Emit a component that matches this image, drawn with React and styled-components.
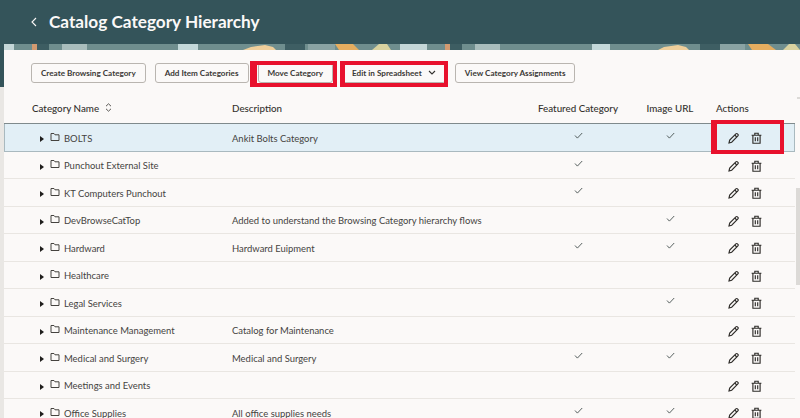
import React from "react";
import styled, { createGlobalStyle } from "styled-components";

const Global = createGlobalStyle`
  html, body { margin: 0; padding: 0; height: 100%; overflow: hidden; background: #e9e7e4; }
  body { font-family: Lato, "Noto Sans", sans-serif; color: #2e2c29; }
`;

const Shell = styled.div`
  position: relative;
  width: 800px;
  height: 418px;
  overflow: hidden;
  background: linear-gradient(#34545a 87px, #e9e7e4 87px);
`;

const Header = styled.header`
  height: 44px;
  display: flex;
  align-items: center;
  padding: 0 0 0 31px;
  gap: 12px;
`;

const Title = styled.h1`
  margin: 0;
  font-size: 17.2px;
  font-weight: 700;
  color: #fbf9f8;
  line-height: 1;
`;

const BannerArt = styled.svg`
  display: block;
  margin-left: 4px;
  width: 796px;
  height: 6px;
`;

const Panel = styled.main`
  margin-left: 4px;
  background: #fbf9f8;
  height: 368px;
  position: relative;
`;

const Toolbar = styled.div`
  display: flex;
  align-items: center;
  height: 44px;
  padding: 1px 0 0 27px;
  gap: 9px;
  box-sizing: border-box;
`;

const Button = styled.button`
  height: 20px;
  padding: 0 9px;
  display: inline-flex;
  align-items: center;
  gap: 6px;
  border: 1px solid #b9b5b0;
  border-radius: 3px;
  background: #fbf9f8;
  color: #3a3835;
  font: 700 8.15px Lato, "Noto Sans", sans-serif;
  white-space: nowrap;
`;

const Grid = styled.div`
  display: grid;
  grid-template-columns: 200px 300px 92px 92px 1fr;
  padding-left: 28px;
  margin-right: 5px;
  align-items: center;
  box-sizing: border-box;
`;

const HeadRow = styled(Grid)`
  height: 30px;
  padding-bottom: 2px;
  font-size: 9.8px;
  font-weight: 500;
  color: #33312e;
  border-bottom: 1px solid #7f8a8c;
`;

const HeadName = styled.div`
  display: flex;
  align-items: center;
  gap: 6px;
`;

const HeadCenter = styled.div`
  text-align: center;
`;

const Row = styled(Grid)`
  height: 27.5px;
  padding-top: 1.5px;
  font-size: 9.45px;
  color: #45433f;
  border-bottom: 1px solid ${(p) => (p.$active ? "#a9b9bf" : "#e9e6e2")};
  background: ${(p) => (p.$active ? "#e2eff6" : "transparent")};
  box-shadow: ${(p) => (p.$active ? "inset 1px 0 #a9b9bf, inset -1px 0 #a9b9bf" : "none")};
`;

const NameCell = styled.div`
  display: flex;
  align-items: center;
  padding-left: 8px;
`;

const Caret = styled.svg`
  width: 4px;
  height: 6px;
  margin-top: 2px;
  margin-right: 6px;
  fill: #1f1e1c;
`;

const FolderIcon = styled.svg`
  width: 10px;
  height: 10px;
  margin-top: -3px;
  margin-right: 4px;
  fill: none;
  stroke: #45433f;
  stroke-width: 1;
`;

const CheckCell = styled.div`
  display: flex;
  justify-content: center;
  margin-top: -5px;
`;

const CheckIcon = styled.svg`
  width: 9px;
  height: 7px;
  fill: none;
  stroke: #45504f;
  stroke-width: 0.9;
`;

const Actions = styled.div`
  display: flex;
  align-items: center;
  padding-left: 12px;
  gap: 12px;
`;

const ActionIcon = styled.svg`
  width: 11px;
  height: 12px;
  fill: none;
  stroke: #2e2c29;
  stroke-width: 1.15;
`;

const RedBox = styled.div`
  position: absolute;
  box-sizing: border-box;
  left: ${(p) => p.$x}px;
  top: ${(p) => p.$y}px;
  width: ${(p) => p.$w}px;
  height: ${(p) => p.$h}px;
  border: 4px solid #e8112d;
  border-left-width: ${(p) => p.$lw}px;
  pointer-events: none;
`;

const ScrollThumb = styled.div`
  position: absolute;
  right: 0;
  top: 188px;
  width: 4px;
  height: 97px;
  background: #dcdad7;
`;

const ScrollSpeck = styled.div`
  position: absolute;
  right: 0;
  top: 97px;
  width: 3px;
  height: 2px;
  background: #dcdad7;
`;

const Pencil = () => (
  <ActionIcon viewBox="0 0 11 12">
    <path d="M1 11l.7-2.9L7.9 1.9c.5-.5 1.1-.5 1.6 0l.4.4c.5.5.5 1.1 0 1.6L3.7 10.2z" />
    <path d="M6.8 3l2 2.1" />
  </ActionIcon>
);

const Trash = () => (
  <ActionIcon viewBox="0 0 11 12">
    <path d="M.6 3.2h9.8M3.8 3.2V1.2h3.4v2M1.9 3.2v8h7.2v-8M4.3 5.2v4M6.7 5.2v4" />
  </ActionIcon>
);

const Check = () => (
  <CheckCell>
    <CheckIcon viewBox="0 0 9 7">
      <path d="M1 3.5l2.4 2.6L8.2 1" />
    </CheckIcon>
  </CheckCell>
);

const rows = [
  ["BOLTS", "Ankit Bolts Category", 1, 1],
  ["Punchout External Site", "", 1, 0],
  ["KT Computers Punchout", "", 1, 0],
  ["DevBrowseCatTop", "Added to understand the Browsing Category hierarchy flows", 0, 1],
  ["Hardward", "Hardward Euipment", 1, 1],
  ["Healthcare", "", 0, 0],
  ["Legal Services", "", 0, 1],
  ["Maintenance Management", "Catalog for Maintenance", 0, 0],
  ["Medical and Surgery", "Medical and Surgery", 1, 1],
  ["Meetings and Events", "", 0, 0],
  ["Office Supplies", "All office supplies needs", 1, 1],
];

/* Patches of the decorative leaf artwork: [x, width, colour], x from the panel's left edge. */
const bannerPatches = [
  [0, 10, "#c4d6d7"], [28, 5, "#d29a70"], [33, 12, "#3d5d62"],
  [58, 25, "#a9bdbc"], [174, 20, "#c3d8d9"], [281, 20, "#3e5e63"],
  [304, 27, "#8aa3a3"], [396, 27, "#c4d6d7"], [441, 5, "#d29a70"],
  [446, 12, "#3d5d62"], [471, 25, "#a9bdbc"], [588, 18, "#c3d8d9"],
  [696, 20, "#3e5e63"], [716, 25, "#8aa3a3"],
];

const Banner = () => (
  <BannerArt viewBox="0 0 796 6" preserveAspectRatio="none">
    <rect width="796" height="6" fill="#6f8e8e" />
    {bannerPatches.map(([x, w, c]) => (
      <rect key={x} x={x} width={w} height="6" fill={c} />
    ))}
    <path d="M239 6l8-3 14-2 8 2 3 3z" fill="#efcf9b" />
    <path d="M331 0h18l6 6h-20z" fill="#e5ad5f" />
    <path d="M368 6l7-6h8l4 6z" fill="#d9d29f" />
    <path d="M654 6l6-3 14-2 8 2 3 3z" fill="#efcf9b" />
    <path d="M744 0h20l8 6h-24z" fill="#e5ad5f" />
    <path d="M779 6l6-6h6l5 6z" fill="#d9d29f" />
  </BannerArt>
);

export default function App() {
  return (
    <Shell>
      <Global />
      <Header>
        <svg width="6" height="10" viewBox="0 0 6 10" fill="none" stroke="#fbf9f8" strokeWidth="1.1">
          <path d="M5 1L1 5l4 4" />
        </svg>
        <Title>Catalog Category Hierarchy</Title>
      </Header>
      <Banner />
      <Panel>
        <Toolbar>
          <Button>Create Browsing Category</Button>
          <Button>Add Item Categories</Button>
          <Button>Move Category</Button>
          <Button>
            Edit in Spreadsheet
            <svg width="8" height="5" viewBox="0 0 8 5" fill="none" stroke="#33312e" strokeWidth="1.1">
              <path d="M1 1l3 3 3-3" />
            </svg>
          </Button>
          <Button>View Category Assignments</Button>
        </Toolbar>
        <HeadRow>
          <HeadName>
            Category Name
            <svg width="7" height="9" viewBox="0 0 7 9" fill="none" stroke="#45433f" strokeWidth="0.9">
              <path d="M1 3.2l2.5-2.4L6 3.2M1 5.8l2.5 2.4L6 5.8" />
            </svg>
          </HeadName>
          <div>Description</div>
          <HeadCenter>Featured Category</HeadCenter>
          <HeadCenter>Image URL</HeadCenter>
          <div>Actions</div>
        </HeadRow>
        {rows.map(([name, desc, featured, image], i) => (
          <Row key={name} $active={i === 0}>
            <NameCell>
              <Caret viewBox="0 0 4 6">
                <path d="M0 0l4 3-4 3z" />
              </Caret>
              <FolderIcon viewBox="0 0 10 10">
                <path d="M1 8.5V1.5h3l1 1.3h4v5.7z" />
              </FolderIcon>
              {name}
            </NameCell>
            <div>{desc}</div>
            {featured ? <Check /> : <div />}
            {image ? <Check /> : <div />}
            <Actions>
              <Pencil />
              <Trash />
            </Actions>
          </Row>
        ))}
      </Panel>
      <RedBox $x={250} $y={61} $w={87} $h={26} $lw={7} />
      <RedBox $x={340} $y={61} $w={108} $h={26} $lw={5} />
      <RedBox $x={711} $y={120} $w={73} $h={34} $lw={6} />
      <ScrollSpeck />
      <ScrollThumb />
    </Shell>
  );
}
